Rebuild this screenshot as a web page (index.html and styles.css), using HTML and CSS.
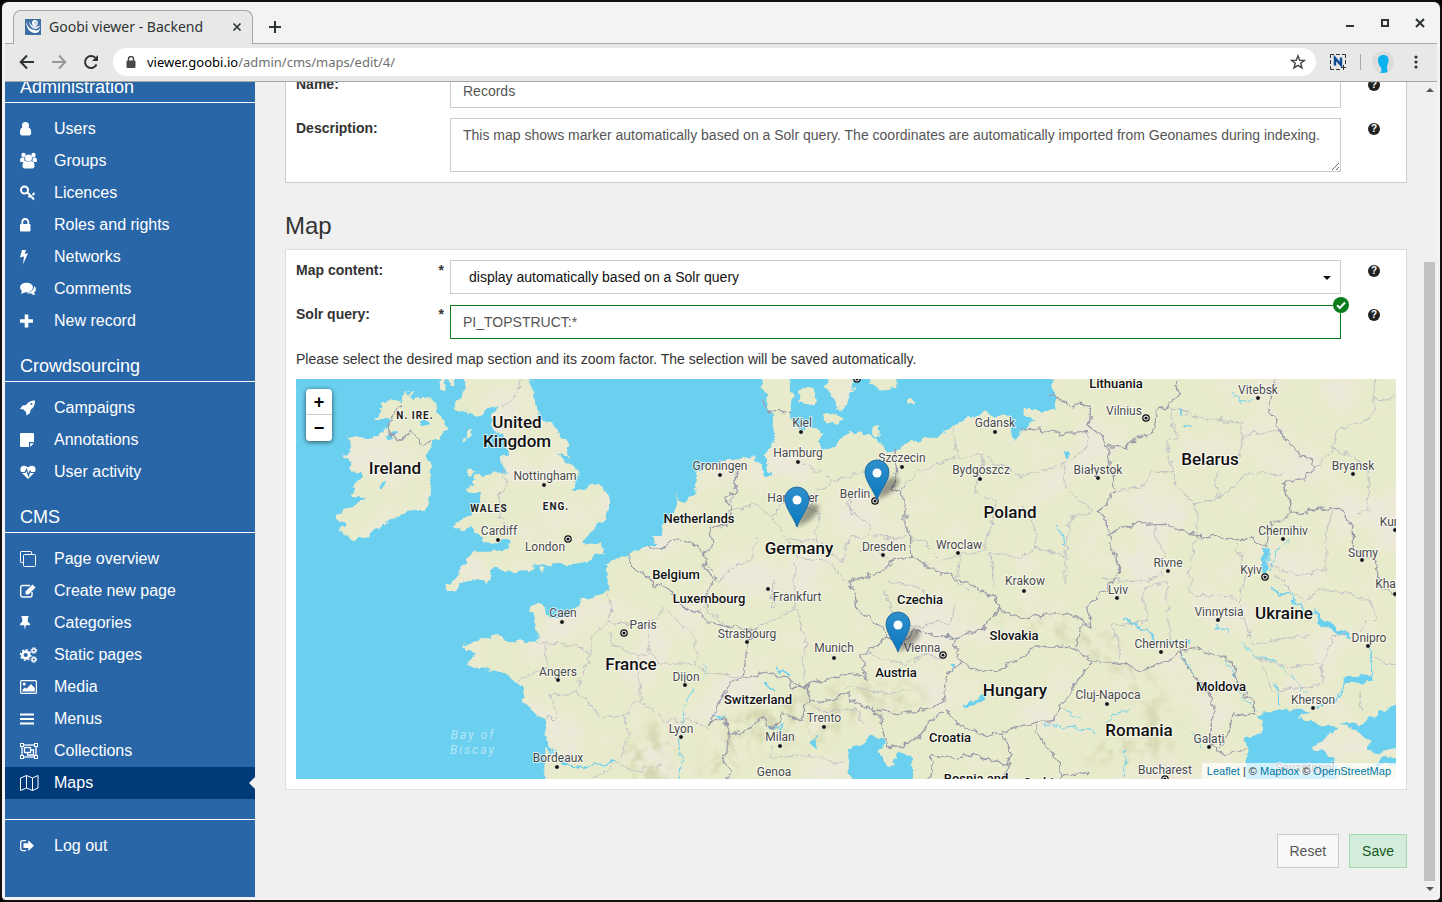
FILE: index.html
```html
<!DOCTYPE html>
<html lang="en">
<head>
<meta charset="utf-8">
<title>Goobi viewer - Backend</title>
<link rel="stylesheet" href="styles.css">
</head>
<body>
<div class="window">
  <header class="titlebar">
    <div class="tab">
      <svg class="favicon" viewBox="0 0 16 16"><rect width="16" height="16" fill="#3f6ea3"/><path d="M1 2c0 7 4 12 9 12 3 0 5-2 5-5-1 2-3 3-5 2C5 11 2 7 1 2z" fill="#fff"/><path d="M4 2c0 4 3 8 6 8 3 0 5-2 5-4-1 1-3 2-5 1C7 7 5 5 4 2z" fill="#dfe8f2"/><circle cx="10" cy="4" r="3" fill="#fff"/><circle cx="11" cy="4" r="2" fill="#c5d5e6"/></svg>
      <span class="tab-title">Goobi viewer - Backend</span>
      <button class="icon-btn" aria-label="Close tab"><svg width="10" height="10" viewBox="0 0 10 10"><path d="M1.500 1.500l7 7m0-7l-7 7" stroke="#2e3436" stroke-width="1.700"/></svg></button>
    </div>
    <button class="icon-btn new-tab" aria-label="New tab"><svg width="12" height="12" viewBox="0 0 12 12"><path d="M6 0v12M0 6h12" stroke="#2e3436" stroke-width="2"/></svg></button>
    <div class="window-controls">
      <button class="icon-btn" aria-label="Minimize"><svg width="10" height="10" viewBox="0 0 10 10"><path d="M1 8h8" stroke="#2e3436" stroke-width="2"/></svg></button>
      <button class="icon-btn" aria-label="Maximize"><svg width="10" height="10" viewBox="0 0 10 10"><path d="M2 2h6v6H2z" fill="none" stroke="#2e3436" stroke-width="2"/></svg></button>
      <button class="icon-btn" aria-label="Close"><svg width="10" height="10" viewBox="0 0 10 10"><path d="M1 1l8 8m0-8L1 9" stroke="#2e3436" stroke-width="2"/></svg></button>
    </div>
  </header>

  <nav class="toolbar" aria-label="Browser">
    <button class="icon-btn nav-btn" aria-label="Back"><svg width="16" height="16" viewBox="0 0 16 16"><path d="M15 8H2M8 1.500L1.700 8 8 14.500" fill="none" stroke="#2e3436" stroke-width="2"/></svg></button>
    <button class="icon-btn nav-btn" aria-label="Forward"><svg width="16" height="16" viewBox="0 0 16 16"><path d="M1 8h13M8 1.500L14.300 8 8 14.500" fill="none" stroke="#999" stroke-width="2"/></svg></button>
    <button class="icon-btn nav-btn" aria-label="Reload"><svg width="16" height="16" viewBox="0 0 16 16"><path d="M13.500 10.500A6 6 0 1 1 12.300 3.800" fill="none" stroke="#2e3436" stroke-width="2"/><path d="M15 1v6H9z" fill="#2e3436"/></svg></button>
    <div class="omnibox">
      <svg width="10" height="12" viewBox="0 0 10 12"><path d="M1 5h8v6.500H1z" fill="#4a4a4a" stroke="#4a4a4a" stroke-linejoin="round"/><path d="M2.500 5V3a2.500 2.500 0 0 1 5 0v2" fill="none" stroke="#4a4a4a" stroke-width="1.500"/></svg>
      <span class="url"><b>viewer.goobi.io</b>/admin/cms/maps/edit/4/</span>
      <button class="icon-btn" aria-label="Bookmark"><svg width="16" height="16" viewBox="0 0 16 16"><path d="M8 1.800l1.700 4.400 4.700.2-3.700 2.900 1.300 4.600L8 11.300l-4 2.600 1.300-4.600-3.700-2.900 4.700-.2z" fill="none" stroke="#444" stroke-width="1.400"/></svg></button>
    </div>
    <button class="icon-btn ext" aria-label="Extension"><svg width="16" height="16" viewBox="0 0 16 16"><path d="M.5 4V.5H4M6 .5h4M12 .5h3.500V4M15.500 6v4M.5 6v4M.5 12v3.500H4M6 15.500h4" fill="none" stroke="#333"/><path d="M5 11.500V4l6 7V3.500" fill="none" stroke="#0b4a94" stroke-width="2.400"/><path d="M13.500 11v5M11 13.500h5" stroke="#333"/></svg></button>
    <span class="divider"></span>
    <button class="icon-btn avatar" aria-label="Profile"><svg width="22" height="22" viewBox="0 0 22 22"><circle cx="11" cy="11" r="11" fill="#dcdcdc"/><path d="M6 9c0-3 2-5 5.500-5S17 6 16.500 10c-.3 3-1.500 4-1.500 6l.5 5c-3 1.500-6 1-8 .5l2-1-.5-4C7 15 6 12 6 9z" fill="#0db1f0"/></svg></button>
    <button class="icon-btn" aria-label="Menu"><svg width="4" height="14" viewBox="0 0 4 14"><g fill="#2e3436"><circle cx="2" cy="2" r="1.600"/><circle cx="2" cy="7" r="1.600"/><circle cx="2" cy="12" r="1.600"/></g></svg></button>
  </nav>

  <div class="viewport">
    <aside class="sidebar">
      <h3>Administration</h3>
      <ul>
        <li><a href="#"><svg viewBox="0 0 20 16"><circle cx="5.500" cy="4.500" r="3.500"/><path d="M0 11.500c0-4 1.500-5 3-5 1 1 4 1 5 0 1.500 0 3.200 1 3.200 5 0 2-.8 3-2.200 3H2C.7 14.500 0 13.500 0 11.500z"/></svg>Users</a></li>
        <li><a href="#"><svg viewBox="0 0 20 16"><circle cx="3.500" cy="2" r="2.200"/><circle cx="13.500" cy="2" r="2.200"/><circle cx="8.500" cy="5" r="3.500"/><path d="M0 8c0-3 1-3.500 2-3.500h2.500c-.5 2 0 3.500 1 4.500H1C.5 9 0 8.700 0 8zM17 8c0-3-1-3.500-2-3.500h-2.500c.5 2 0 3.500-1 4.500H16c.5 0 1-.3 1-1zM2.500 13c0-4 1.500-5 3-5 1.500 1 4.500 1 6 0 1.500 0 3 1 3 5 0 1.500-1 2.500-2.300 2.500H5c-1.500 0-2.500-1-2.500-2.500z"/></svg>Groups</a></li>
        <li><a href="#"><svg viewBox="0 0 20 16"><circle cx="4.500" cy="5" r="3.500" fill="none" stroke="#fff" stroke-width="2"/><path d="M7 7l7 7.500M10 10.500l-1.500 2M12.500 10l2-2" stroke="#fff" stroke-width="2" fill="none"/></svg>Licences</a></li>
        <li><a href="#"><svg viewBox="0 0 20 16"><rect y="7" width="10.500" height="7.500" rx="1"/><path d="M2.300 8V5a3 3 0 0 1 6 0v3" fill="none" stroke="#fff" stroke-width="1.800"/></svg>Roles and rights</a></li>
        <li><a href="#"><svg viewBox="0 0 20 16"><path d="M2 1h4L4.800 5l3.200-.8L3 15.500l1-8-4 1z"/></svg>Networks</a></li>
        <li><a href="#"><svg viewBox="0 0 20 16"><ellipse cx="6.500" cy="6.500" rx="6.500" ry="4.800"/><path d="M2 9.500L1 13l5-2zM14.300 5c2.200 2 2.200 5-.3 6.500L15 14c-1.500 0-2.500-.5-3.500-1.500-2 .3-4 0-5-.8 4 0 7.500-2.200 7.800-6.700z"/></svg>Comments</a></li>
        <li><a href="#"><svg viewBox="0 0 20 16"><path d="M6.500 1.500v13M0 8h13" stroke="#fff" stroke-width="3.600"/></svg>New record</a></li>
      </ul>
      <h3>Crowdsourcing</h3>
      <ul>
        <li><a href="#"><svg viewBox="0 0 20 16"><path d="M15 .5c0 5-1.500 7-4.500 9.500L10 13l-3.500 2.500-.5-3.500L3.500 9.500 0 9l2.500-3.500L6 5C8.500 2 10.500.5 15 .5z"/><circle cx="11.500" cy="4" r="1" fill="#2866a8"/></svg>Campaigns</a></li>
        <li><a href="#"><svg viewBox="0 0 20 16"><path d="M1 1h12a1 1 0 0 1 1 1v8H9v5H1a1 1 0 0 1-1-1V2a1 1 0 0 1 1-1zM10.200 11.200H14L10.200 15z"/></svg>Annotations</a></li>
        <li><a href="#"><svg viewBox="0 0 20 16"><path d="M8 15L1.500 8.500C-2 4 3-1 8 3.500 13-1 18 4 14.500 8.500z"/><path d="M1 8.500h4l1.500-3 2 6L10 7l1 1.500h4" fill="none" stroke="#2866a8" stroke-width="1.200"/></svg>User activity</a></li>
      </ul>
      <h3>CMS</h3>
      <ul>
        <li><a href="#"><svg class="line" viewBox="0 0 20 16"><path d="M3.500 11.500H1.200a.7.700 0 0 1-.7-.7V1.200c0-.4.300-.7.700-.7h9.600c.4 0 .7.300.7.700V3.500"/><rect x="3.500" y="3.500" width="12" height="12" rx="1"/></svg>Page overview</a></li>
        <li><a href="#"><svg class="line" viewBox="0 0 20 16"><path d="M12 9v3a2 2 0 0 1-2 2H2.700a2 2 0 0 1-2-2V4.500a2 2 0 0 1 2-2H10" stroke-width="1.400"/><path d="M5.500 11.500V8.500L12.500 1.500 15.500 4.500 8.500 11.500z" fill="#fff" stroke="none"/></svg>Create new page</a></li>
        <li><a href="#"><svg viewBox="0 0 20 16"><path d="M1.500 1h7v1.500L7.800 3v4c1.500.5 2.400 1.800 2.400 3.200H5.800L5 15l-.8-4.800H0C0 8.800.8 7.500 2.200 7V3l-.7-.5z"/></svg>Categories</a></li>
        <li><a href="#"><svg class="line" viewBox="0 0 20 16"><circle cx="5.700" cy="8" r="3.400" stroke-width="2.600"/><circle cx="5.700" cy="8" r="5.200" stroke-width="1.400" stroke-dasharray="2 2"/><circle cx="13.800" cy="3.500" r="1.800" stroke-width="1.400"/><circle cx="13.800" cy="3.500" r="2.900" stroke-dasharray="1.300 1"/><circle cx="13.800" cy="12.500" r="1.800" stroke-width="1.400"/><circle cx="13.800" cy="12.500" r="2.900" stroke-dasharray="1.300 1"/></svg>Static pages</a></li>
        <li><a href="#"><svg viewBox="0 0 20 16"><rect x=".6" y="1.600" width="15.800" height="12.800" rx="1" fill="none" stroke="#fff" stroke-width="1.200"/><circle cx="4.200" cy="5" r="1.600"/><path d="M2.500 12.500v-2l2.500-2 1.500 1.300L11 5l3.800 4v3.500z"/></svg>Media</a></li>
        <li><a href="#"><svg viewBox="0 0 20 16"><path d="M0 3.500h14M0 8h14M0 12.500h14" stroke="#fff" stroke-width="2"/></svg>Menus</a></li>
        <li><a href="#"><svg class="line" viewBox="0 0 20 16"><rect x="2" y="2" width="14" height="12" stroke-width="1.300"/><rect x="4.500" y="4.500" width="6" height="5" stroke-width="1.300"/><path d="M10.500 7H13.500v5H7.500V9.500" stroke-width="1.300"/><g fill="#2866a8"><rect x=".5" y=".5" width="3" height="3"/><rect x="14.500" y=".5" width="3" height="3"/><rect x=".5" y="12.500" width="3" height="3"/><rect x="14.500" y="12.500" width="3" height="3"/></g></svg>Collections</a></li>
        <li class="active"><a href="#"><svg class="line" viewBox="0 0 20 16"><path d="M.5 3L6.500.5l6 2.500 5.500-2.500v12.500l-5.500 2.500-6-2.500-6 2.500zM6.500.5V13M12.500 3v12.500"/></svg>Maps</a></li>
      </ul>
      <ul class="logout">
        <li><a href="#"><svg viewBox="0 0 20 16"><path d="M6 2.600H2.500A1.800 1.800 0 0 0 .7 4.400v6.400a1.800 1.800 0 0 0 1.800 1.800H6" fill="none" stroke="#fff" stroke-width="1.300"/><path d="M3.500 5.200h4.800V2.300L14 7.700 8.300 13v-2.900H3.500z"/></svg>Log out</a></li>
      </ul>
    </aside>

    <main class="content">
      <section class="card card-first">
        <div class="row">
          <label for="name">Name:</label>
          <input id="name" type="text" value="Records">
          <button class="help" aria-label="Help">?</button>
        </div>
        <div class="row">
          <label for="description">Description:</label>
          <textarea id="description">This map shows marker automatically based on a Solr query. The coordinates are automatically imported from Geonames during indexing.</textarea>
          <button class="help" aria-label="Help">?</button>
        </div>
      </section>

      <h2>Map</h2>
      <section class="card">
        <div class="row">
          <label for="content">Map content:<span>*</span></label>
          <div class="field">
            <select id="content"><option>display automatically based on a Solr query</option></select>
            <span class="caret"></span>
          </div>
          <button class="help" aria-label="Help">?</button>
        </div>
        <div class="row">
          <label for="solr">Solr query:<span>*</span></label>
          <div class="field checked">
            <input id="solr" class="valid" type="text" value="PI_TOPSTRUCT:*">
            <svg class="check" viewBox="0 0 16 16"><circle cx="8" cy="8" r="8" fill="#0a7c1c"/><path d="M4 8.200l2.800 2.800L12 5.500" fill="none" stroke="#fff" stroke-width="2"/></svg>
          </div>
          <button class="help" aria-label="Help">?</button>
        </div>
        <p>Please select the desired map section and its zoom factor. The selection will be saved automatically.</p>
        <div class="map">
          <svg class="map-canvas" viewBox="0 0 1100 400" preserveAspectRatio="xMidYMid slice" role="img" aria-label="Map of Europe">
            <defs>
              <filter id="coast" filterUnits="userSpaceOnUse" x="-40" y="-40" width="3400" height="1320" color-interpolation-filters="sRGB">
                <feTurbulence type="fractalNoise" baseFrequency=".035" numOctaves="3" seed="4" result="n"/>
                <feDisplacementMap in="SourceGraphic" in2="n" scale="30" xChannelSelector="R" yChannelSelector="G" result="land"/>
                <feTurbulence type="fractalNoise" baseFrequency=".006" numOctaves="4" seed="11" result="t"/>
                <feColorMatrix in="t" values="0 0 0 0 .925  0 0 0 0 .914  0 0 0 0 .847  4 0 0 0 -1.900" result="patch"/>
                <feComposite in="patch" in2="land" operator="in" result="p"/>
                <feMerge><feMergeNode in="land"/><feMergeNode in="p"/></feMerge>
              </filter>
              <filter id="jag" filterUnits="userSpaceOnUse" x="-40" y="-40" width="3400" height="1320" color-interpolation-filters="sRGB">
                <feTurbulence type="fractalNoise" baseFrequency=".035" numOctaves="3" seed="4" result="n"/>
                <feDisplacementMap in="SourceGraphic" in2="n" scale="30" xChannelSelector="R" yChannelSelector="G"/>
              </filter>
              <filter id="relief" filterUnits="userSpaceOnUse" x="-40" y="-40" width="3400" height="1320" color-interpolation-filters="sRGB">
                <feGaussianBlur in="SourceGraphic" stdDeviation="24" result="b"/>
                <feTurbulence type="fractalNoise" baseFrequency=".022" numOctaves="3" seed="8" result="t"/>
                <feColorMatrix in="t" values="0 0 0 0 .8  0 0 0 0 .81  0 0 0 0 .65  0 4 0 0 -1.800" result="c"/>
                <feComposite in="c" in2="b" operator="in"/>
              </filter>
              <linearGradient id="pinfill" x2="0" y2="1"><stop offset="0" stop-color="#2e8fcb"/><stop offset="1" stop-color="#0a78c0"/></linearGradient>
              <filter id="soft" x="-50%" y="-50%" width="200%" height="200%"><feGaussianBlur stdDeviation="2"/></filter>
              <g id="pin"><path d="M0 0L4-12C9-22 16-25 21-22 24-19 20-12 12-6z" fill="#000" opacity=".35" filter="url(#soft)"/><path d="M0 0C-3-9-12-19-12-28a12 12 0 0 1 24 0C12-19 3-9 0 0z" fill="url(#pinfill)" stroke="#2a6f9e"/><circle cy="-27" r="4.500" fill="#fff"/></g>
              <circle id="dot" r="2.300" fill="#111" stroke="#fff" stroke-opacity=".6"/>
              <g id="cap"><circle r="3.200" fill="#fff" stroke="#111" stroke-width="1.200"/><circle r="1.600" fill="#111"/></g>
            </defs>
            <g transform="translate(0 -4) scale(.33333)">
              <g filter="url(#coast)" fill="#e8ebcb">
                <path d="M250 85 285 75 318 85 325 55 345 58 350 75 405 70 415 85 418 110 445 140 450 165 435 190 405 205 395 240 405 290 410 330 385 410 330 410 255 455 210 488 165 490 130 465 150 450 115 418 160 400 210 370 165 365 185 320 205 300 150 285 165 260 145 240 170 235 155 185 190 180 215 190 250 180 270 160 285 135 235 130 260 105z"/>
                <path d="M500-10 510 40 480 80 475 100 520 115 545 125 575 105 610 95 590 120 585 165 620 175 640 230 618 255 620 280 640 290 600 290 560 300 545 300 535 330 505 345 555 350 550 380 520 415 490 440 470 448 490 465 520 460 555 490 580 500 620 505 645 485 635 520 615 530 530 530 510 570 480 610 440 640 470 652 500 620 540 610 570 628 585 600 590 580 650 588 700 585 720 565 750 570 800 565 840 570 880 550 920 530 915 508 865 505 885 465 930 430 942 380 930 345 890 330 855 345 828 345 848 310 840 280 785 240 825 248 810 200 770 150 735 130 720 80 705 20 700-10z"/>
                <path d="M503 195 515 168 528 165 520 192zM512 285 525 280 542 290 530 305 515 302zM725 578 738 572 748 580 738 590zM430 52 440 15 455-10 470-10 475 35 465 30 455 12 445 50z"/>
                <path d="M1382-10 1400 30 1420 60 1415 100 1435 120 1430 150 1440 180 1425 210 1410 235 1415 280 1435 300 1410 310 1400 280 1385 255 1340 245 1300 255 1240 270 1205 290 1198 350 1165 385 1145 380 1150 340 1135 400 1110 440 1095 480 1065 490 1092 505 1055 512 1000 540 940 560 935 600 935 640 925 655 860 675 835 700 835 715 800 722 750 720 735 690 700 690 715 720 720 760 725 800 690 800 640 805 610 780 560 790 505 810 510 825 540 835 515 860 535 875 600 890 640 905 660 925 685 945 680 980 705 1010 745 1032 755 1065 745 1090 775 1140 748 1115 748 1250 3340 1250 3340-10 2272-10 2275 105 2185 105 2190 125 2225 128 2175 165 2154 205 2142 185 2152 155 2140 125 2060 115 2010 128 1960 165 1900 190 1830 205 1810 225 1770 230 1755 210 1740 190 1700 180 1670 165 1640 190 1607 212 1575 222 1565 200 1580 175 1540 155 1500 160 1480 110 1490 60 1470-10z"/>
                <path d="M1507 45 1530 35 1558 50 1555 85 1530 95 1512 75zM1592-10 1595 40 1615 70 1630 102 1650 90 1655 60 1680 50 1665 20 1680-10zM1580 125 1610 115 1645 135 1620 150 1590 140zM1710-10 1720 30 1740 45 1800 40 1805-10zM1832 68 1845 65 1858 80 1852 92 1835 84zM1725 155 1745 150 1755 172 1735 185 1722 172z"/>
              </g>
              <g filter="url(#relief)" fill="#000" opacity=".65"><path d="M1260 1080 1340 990 1500 960 1640 930 1800 920 1920 960 1840 1000 1700 1010 1600 1090 1480 1110 1340 1140 1300 1260 1200 1240zM2080 740 2300 720 2420 780 2560 900 2640 1080 2600 1160 2380 1160 2360 1120 2560 1080 2500 920 2330 800zM980 1100 1120 1020 1130 1240 1000 1240z"/></g>
              <g filter="url(#jag)" fill="#6bd0ef">
                <path d="M1657 1250 1660 1180 1655 1120 1690 1110 1720 1085 1760 1090 1762 1120 1750 1125 1770 1170 1790 1175 1805 1130 1840 1140 1845 1180 1860 1250zM2847 1250 2852 1165 2850 1090 2890 1070 2900 1040 2880 1020 2920 1010 2980 1000 3050 1010 3010 1030 3080 1050 3125 1055 3110 1080 3065 1100 3048 1120 3075 1128 3115 1150 3118 1180 3130 1250zM3320 990 3265 1000 3230 1025 3190 1050 3130 1045 3190 1070 3215 1100 3220 1125 3265 1130 3320 1115zM3320 1145 3250 1150 3230 1165 3320 1175z"/>
                <path d="M370 140 385 130 400 145 385 155zM245 345 265 315 270 322 252 345zM270 182 298 168 300 180 285 190zM2000 990 2040 975 2065 960 2068 968 2040 988 2005 996zM3050 700 3075 730 3160 775 3170 788 3070 755zM2900 522 2915 522 2915 595 2902 595zM3140 905 3225 895 3235 920 3150 925zM2300 235 2320 232 2315 248 2302 245zM2645 105 2660 105 2655 120zM2665 150 2690 152 2675 160zM1540 1105 1565 1080 1555 1115zM1960 870 1975 868 1970 892z"/>
                <g fill="none" stroke="#6bd0ef" stroke-width="5"><path d="M2920 635 2955 660 2980 650 3000 690 3050 720M3225 810 3225 900M3150 920 3125 975 3060 1000M2940 920 2955 990M1252 1020 1290 1025M1438 880 1490 905M1405 930 1435 945M790 1165 850 1178 905 1170 960 1160M775 1125 790 1165M2485 730 2550 765 2580 800 2680 800M1460 1050 1450 1075M1465 1045 1415 1065" /><path d="M1150 1090 1155 1140 1145 1240M1190 940 1160 1000 1150 1060M2300 1010 2360 1030M2245 1050 2350 1060 2400 1075M2430 1050 2450 1020 2500 1010M2485 1130 2485 1210M2275 450 2305 490 2315 530M2810 50 2835 85 2880 70M2760 750 2800 775M2830 800 2880 845 2940 860 3000 920 3030 960M2655 830 2690 890M2780 850 2810 880 2830 950 2880 1010M2980 490 2940 530 2920 590M2690 1070 2715 1120M1220 870 1235 890 1225 910" stroke-width="3"/></g>
              </g>
              <g filter="url(#jag)" fill="none" stroke="#c0c0c6" stroke-width="3">
                <path d="M675 12 660 60 620 95M620 285 635 330 610 360 610 430 630 455M725 800 850 815 885 840 860 900 835 950M750 805 752 885 690 900 660 920M765 965 835 950 870 970 910 1025 980 1020M765 965 785 1030 745 1032M925 655 945 690 940 740 885 790 885 840M940 740 1060 750 1092 720 1105 690M940 770 950 810 1020 845 1060 825 1060 750M1020 845 1035 980 980 1020 1000 1080 970 1160 890 1210M1035 980 1080 1010 1110 1040 1180 1030 1240 1060M970 1160 1020 1190 1092 1170M1060 825 1092 870 1200 865 1220 890 1340 905M1110 700 1200 790 1200 870M1300 755 1220 700 1240 650"/>
                <path d="M1318 275 1315 350 1300 410 1380 390 1430 430 1450 380 1540 400 1560 350 1610 320 1580 290 1520 270M1610 320 1700 290 1795 300M1540 400 1575 420 1550 470 1560 500M1430 430 1470 490 1520 500 1560 500 1640 560 1660 490 1720 480 1730 450 1660 410 1665 360M1380 490 1370 550 1310 580 1260 620M1470 490 1500 550 1600 560 1650 620M1500 560 1500 700 1420 740 1385 762M1430 620 1430 700M1500 700 1530 800 1520 910M1720 480 1790 490 1835 480M1690 520 1740 525 1780 560M1765 650 1790 720 1850 760 1920 740 1960 750 1980 690M1780 620 1870 640 1930 700M1700 830 1830 870 1880 840 1950 850M1650 930 1750 950 1800 960 1850 940M1550 1000 1600 1010 1680 1000 1700 1050M1430 1110 1420 1150 1530 1140 1640 1165"/>
                <path d="M1970 150 1980 250 1920 260 1830 320 1810 360M1980 250 2060 240 2150 290 2172 310 2300 270 2380 210 2370 170M2060 240 2040 350 2100 380 2080 480 2060 530 2000 535 1940 560 1870 490 1850 490M2080 530 2172 550 2220 520 2310 540 2310 630M2172 390 2220 450 2220 520M2300 270 2310 340 2390 410 2320 430 2310 540M2080 530 2100 640M1990 540 1980 600 2010 650"/>
                <path d="M2620 95 2640 190 2610 200 2635 290 2570 290 2550 330 2460 350M2620 95 2720 130 2840 145 2830 250 2765 260 2760 300 2770 370 2700 390 2700 490M2635 290 2640 340 2700 390M2770 370 2860 295 2960 300M2840 180 2930 170 2960 165M3240 12 3230 130 3130 160 3110 220 3070 270M3110 220 3180 250 3220 300 3220 400 3180 420M3230 70 3300 72M2580 450 2580 500 2610 540 2600 600 2510 620 2420 610M2700 490 2680 600 2690 660 2820 670M2820 510 2850 600 2830 680 2850 750 2870 810 3040 780M2920 570 3000 600 3090 590 3090 500 3110 400M2940 600 3020 680 3080 640 3220 670 3240 720 3190 770M2480 850 2450 750 2550 740 2540 640 2610 620 2620 800M2880 850 3000 880 3080 860 3110 790 3150 770M3080 870 3080 930 2930 950 2890 850M3190 940 3200 1010M3240 850 3300 870"/>
              </g>
              <g filter="url(#jag)" fill="none" stroke="#9a9ba9" stroke-width="4">
                <path d="M320 90 290 130 270 155 300 195 325 195 345 165 375 205 405 200M1400 80 1420 110 1490 110M1000 540 1010 575 1050 600 1092 635 1132 655 1157 695 1212 715 1232 740 1300 755 1385 762 1357 805 1350 860 1340 905M1055 515 1092 522 1132 497 1192 502 1222 535 1225 570 1260 610 1232 650 1232 700M1320 275 1317 350 1287 370 1307 410 1297 450 1242 455 1247 510 1222 540"/>
                <path d="M1340 910 1302 920 1282 970 1237 1045 1282 1025 1302 1075 1342 1070 1402 1025 1422 1065 1462 1015 1517 1035 1522 1000 1542 975 1532 930 1482 940 1482 910 1412 890 1342 908M1282 1040 1307 1080 1282 1145 1302 1185 1292 1220M1482 915 1522 935 1562 920 1622 905 1682 900 1712 915 1697 840 1757 805 1777 785 1812 810 1852 765 1922 780 1982 790 1977 820 1997 860 1952 900 1947 970 1912 995 1832 1015 1732 1005 1662 975 1657 955 1572 985 1537 975M1777 785 1742 750 1682 700 1672 650 1657 620 1752 590 1807 550 1852 555 1942 595 1992 610 2042 640 2102 670 2112 705 2172 730 2240 718 2320 715 2382 755M1797 220 1802 290 1792 340 1827 380 1827 450 1847 490 1847 555M2112 705 2082 730 2052 765 1982 790"/>
                <path d="M1997 860 2042 890 2112 885 2172 845 2232 810 2337 820 2362 750M2337 820 2387 860 2342 920 2292 1000 2267 1040 2180 1048 2122 1070 2072 1085 1982 1045 1947 1000M1732 1005 1752 1030 1772 1115 1842 1110 1872 1080 1902 1040 1942 1010M1902 1215 1907 1140 1962 1150 2022 1140 2142 1170 2122 1215M2117 1070 2147 1140 2122 1170M2212 1050 2247 1115 2292 1160 2302 1200 2380 1195M2387 860 2502 870 2532 890 2612 860 2652 830 2692 900 2752 970 2747 1110 2782 1135 2852 1120M2652 825 2712 820 2792 855 2822 870 2817 910 2842 950 2872 980 2872 1020 2812 1015 2802 1060 2772 1120"/>
                <path d="M2257 60 2312 85 2382 90 2377 150 2412 180 2432 215 2457 350 2407 410 2437 440 2437 485 2467 560 2467 600 2372 700 2382 755M2172 160 2292 172 2382 170M2432 215 2492 220 2522 190 2572 170 2587 110 2652 60 2642 12M2437 485 2492 450 2602 445 2702 485 2772 485 2812 495 2872 490 2912 515M2937 12 2922 110 2962 180 3012 240 3062 270 3032 310 2962 320 2987 420 2922 450 2912 515M2987 420 3042 405 3132 400 3172 460 3172 520 3242 560 3242 630 3300 660"/>
              </g>
            </g>
            <g class="cities">
              <text x="249" y="101">Nottingham</text><use href="#dot" x="248" y="106"/>
              <text x="203" y="156">Cardiff</text><use href="#dot" x="202" y="161"/>
              <text x="249" y="172">London</text><use href="#cap" x="272" y="160"/>
              <text x="267" y="238">Caen</text><use href="#dot" x="266" y="243"/>
              <text x="347" y="250">Paris</text><use href="#cap" x="328" y="254"/>
              <text x="262" y="297">Angers</text><use href="#dot" x="262" y="301"/>
              <text x="262" y="383">Bordeaux</text><use href="#dot" x="261" y="388"/>
              <text x="424" y="91">Groningen</text><use href="#dot" x="424" y="96"/>
              <text x="506" y="48">Kiel</text><use href="#dot" x="505" y="53"/>
              <text x="502" y="78">Hamburg</text><use href="#dot" x="502" y="83"/>
              <text x="497" y="123">Hannover</text>
              <text x="559" y="119">Berlin</text><use href="#cap" x="579" y="122"/>
              <text x="606" y="83">Szczecin</text><use href="#dot" x="606" y="88"/>
              <text x="685" y="95">Bydgoszcz</text><use href="#dot" x="684" y="100"/>
              <text x="699" y="48">Gdansk</text><use href="#dot" x="699" y="53"/>
              <text x="588" y="172">Dresden</text><use href="#dot" x="587" y="176"/>
              <text x="663" y="170">Wroclaw</text><use href="#dot" x="662" y="174"/>
              <text x="729" y="206">Krakow</text><use href="#dot" x="728" y="212"/>
              <text x="501" y="222">Frankfurt</text><use href="#dot" x="472" y="210"/>
              <text x="451" y="259">Strasbourg</text><use href="#dot" x="451" y="263"/>
              <text x="538" y="273">Munich</text><use href="#dot" x="538" y="279"/>
              <text x="626" y="273">Vienna</text><use href="#cap" x="647" y="276"/>
              <text x="390" y="302">Dijon</text><use href="#dot" x="389" y="306"/>
              <text x="385" y="354">Lyon</text><use href="#dot" x="385" y="358"/>
              <text x="528" y="343">Trento</text><use href="#dot" x="528" y="348"/>
              <text x="484" y="362">Milan</text><use href="#dot" x="484" y="367"/>
              <text x="478" y="397">Genoa</text>
              <text x="828" y="36">Vilnius</text><use href="#cap" x="850" y="39"/>
              <text x="962" y="15">Vitebsk</text><use href="#dot" x="962" y="19"/>
              <text x="802" y="95">Białystok</text><use href="#dot" x="802" y="99"/>
              <text x="1057" y="91">Bryansk</text><use href="#dot" x="1057" y="95"/>
              <text x="987" y="156">Chernihiv</text><use href="#dot" x="987" y="160"/>
              <text x="1099" y="147">Kursk</text><use href="#dot" x="1099" y="151"/>
              <text x="1067" y="178">Sumy</text><use href="#dot" x="1066" y="181"/>
              <text x="872" y="188">Rivne</text><use href="#dot" x="872" y="192"/>
              <text x="955" y="195">Kyiv</text><use href="#cap" x="969" y="198"/>
              <text x="1099" y="209">Kharkiv</text><use href="#dot" x="1099" y="215"/>
              <text x="822" y="215">Lviv</text><use href="#dot" x="821" y="219"/>
              <text x="923" y="237">Vinnytsia</text><use href="#dot" x="922" y="241"/>
              <text x="865" y="269">Chernivtsi</text><use href="#dot" x="865" y="273"/>
              <text x="1073" y="263">Dnipro</text><use href="#dot" x="1072" y="267"/>
              <text x="812" y="320">Cluj-Napoca</text><use href="#dot" x="811" y="325"/>
              <text x="1017" y="325">Kherson</text><use href="#dot" x="1017" y="329"/>
              <text x="913" y="364">Galați</text><use href="#dot" x="913" y="368"/>
              <text x="869" y="395">Bucharest</text><use href="#cap" x="869" y="400"/>
              <text x="1009" y="393">Sevastopol</text>
              <use href="#cap" x="561" y="0"/>
            </g>
            <g class="countries big">
              <text x="99" y="95">Ireland</text><text x="221" y="49">United</text><text x="221" y="68">Kingdom</text>
              <text x="335" y="291">France</text><text x="503" y="175">Germany</text><text x="714" y="139">Poland</text>
              <text x="914" y="86">Belarus</text><text x="988" y="240">Ukraine</text><text x="719" y="317">Hungary</text><text x="843" y="357">Romania</text>
            </g>
            <g class="countries">
              <text x="403" y="144">Netherlands</text><text x="380" y="200">Belgium</text><text x="413" y="224">Luxembourg</text>
              <text x="462" y="325">Switzerland</text><text x="624" y="225">Czechia</text><text x="600" y="298">Austria</text>
              <text x="718" y="261">Slovakia</text><text x="654" y="363">Croatia</text><text x="680" y="404">Bosnia and</text>
              <text x="820" y="9">Lithuania</text><text x="925" y="312">Moldova</text><text x="746" y="408">Serbia</text>
            </g>
            <g class="regions"><text x="119" y="40">N. IRE.</text><text x="193" y="133">WALES</text><text x="260" y="131">ENG.</text></g>
            <g class="water"><text x="177" y="360">Bay of</text><text x="177" y="375">Biscay</text></g>
            <use href="#pin" x="501" y="148"/><use href="#pin" x="581" y="121"/><use href="#pin" x="602" y="273"/>
          </svg>
          <div class="zoom"><button aria-label="Zoom in">+</button><button aria-label="Zoom out">−</button></div>
          <div class="attribution"><a href="#">Leaflet</a> | © <a href="#">Mapbox</a> © <a href="#">OpenStreetMap</a></div>
        </div>
      </section>
      <div class="actions"><button class="btn">Reset</button><button class="btn save">Save</button></div>
    </main>
    <div class="scrollbar"><span class="arrow up"></span><span class="thumb"></span><span class="arrow down"></span></div>
  </div>
</div>
</body>
</html>
```

FILE: styles.css
```css
* { box-sizing: border-box; }
body { margin: 0; background: #000; font: 14px/20px "Liberation Sans", Arial, sans-serif; color: #333; }
button { font: inherit; margin: 0; cursor: pointer; }
.window { display: flex; flex-direction: column; height: 100vh; border: 2px solid #111; border-radius: 8px 8px 6px 6px; background: #f3f3f3; padding: 0 3px 3px; overflow: hidden; }
.icon-btn { display: flex; align-items: center; justify-content: center; border: 0; padding: 0; background: none; flex: none; }

.titlebar { flex: none; display: flex; height: 42px; border-bottom: 1px solid #a5a7a4; padding: 8px 12px 0 8px; }
.tab { display: flex; align-items: center; width: 240px; height: 34px; padding: 0 10px 2px 11px; background: #e8e8e6; border: 1px solid #a5a7a4; border-bottom: 0; border-radius: 8px 8px 0 0; font: 14px/20px "Noto Sans", sans-serif; color: #2e3436; }
.favicon { width: 16px; height: 16px; margin-right: 8px; flex: none; }
.tab-title { flex: 1; white-space: nowrap; }
.new-tab { width: 44px; height: 34px; }
.window-controls { display: flex; gap: 25px; margin-left: auto; height: 26px; }

.toolbar { flex: none; display: flex; align-items: center; height: 38px; background: #e8e8e6; border-bottom: 1px solid #a5a7a4; padding: 0 19px 1px 14px; }
.nav-btn { width: 16px; margin-right: 16px; }
.nav-btn:nth-child(3) { margin-right: 14px; }
.omnibox { flex: 1; display: flex; align-items: center; height: 28px; padding: 0 10px 0 13px; border-radius: 14px; background: #fff; }
.url { flex: 1; margin-left: 11px; font: 13px/20px "Noto Sans", sans-serif; color: #707070; }
.url b { font-weight: 400; color: #000; }
.ext { margin-left: 14px; }
.divider { width: 1px; height: 16px; margin: 0 11px 0 14px; background: #aaa; }
.avatar { margin-right: 20px; }

.viewport { flex: 1; min-height: 0; display: flex; background: #f0f0f0; }
.sidebar { width: 250px; flex: none; display: flex; flex-direction: column; justify-content: flex-end; overflow: hidden; background: #2866a8; color: #fff; padding-bottom: 35px; }
.sidebar > * { flex: none; }
.sidebar h3 { margin: 0; padding: 18px 15px 4px; border-bottom: 1px solid #fff; font: 18px/22px "Liberation Sans", Arial, sans-serif; }
.sidebar ul { margin: 0; padding: 10px 0 0; list-style: none; }
.sidebar li { position: relative; }
.sidebar a { display: flex; align-items: center; height: 32px; padding: 0 15px 1px; color: #fff; font-size: 16px; text-decoration: none; }
.sidebar svg { width: 20px; height: 16px; margin-right: 14px; fill: #fff; overflow: visible; }
.sidebar svg.line { fill: none; stroke: #fff; }
.sidebar .active { background: #003a78; }
.active::after { content: ""; position: absolute; right: 0; top: 10px; border: 6px solid transparent; border-right-color: #f0f0f0; border-left: 0; }
.sidebar .logout { margin-top: 20px; border-top: 1px solid #fff; }

.content { flex: 1; min-width: 0; display: flex; flex-direction: column; justify-content: flex-end; overflow: hidden; padding: 0 15px 29px 30px; }
.content > * { flex: none; }
.card { background: #fff; border: 1px solid #ddd; padding: 10px; }
.card-first { border-color: #ccc; }
.row { display: grid; grid-template-columns: 154px 1fr 55px; margin-bottom: 10px; align-items: start; }
.card-first .row:last-child { margin-bottom: 0; }
label { display: flex; justify-content: space-between; padding-right: 6px; font-weight: 700; }
input, textarea, select { display: block; width: 100%; height: 34px; margin: 0; padding: 6px 12px; border: 1px solid #ccc; border-radius: 0; background: #fff; font: inherit; color: #555; outline: 0; }
textarea { height: 54px; resize: vertical; overflow: hidden; }
select { appearance: none; padding-left: 18px; color: #111; }
.field { position: relative; }
.checked { margin-top: 1px; }
.caret { position: absolute; right: 10px; top: 16px; border: 4px solid transparent; border-top-color: #111; border-bottom: 0; pointer-events: none; }
.valid { border-color: #0a7c1c; }
.check { position: absolute; right: -8px; top: -8px; width: 16px; height: 16px; }
.help { justify-self: end; width: 12px; height: 12px; margin: 5px 16px 0 0; padding: 0; border: 0; border-radius: 50%; background: #222; color: #fff; font: 700 10px/12px "Liberation Sans", Arial, sans-serif; }
h2 { margin: 29px 0 9px; font: 24px/28px "Liberation Sans", Arial, sans-serif; }
.card p { margin: 0 0 10px; }

.map { position: relative; height: 400px; overflow: hidden; background: #6bd0ef; }
.map-canvas { display: block; width: 100%; height: 100%; }
.map-canvas text { text-anchor: middle; paint-order: stroke; stroke: #fff; stroke-opacity: .7; stroke-width: 2px; stroke-linejoin: round; font-family: Roboto, sans-serif; }
.cities text { font-size: 12px; fill: #4a4a4a; }
.countries text { font-size: 13px; font-weight: 500; fill: #111; }
.countries.big text { font-size: 17px; }
.regions text { font-size: 10px; font-weight: 700; letter-spacing: 1px; fill: #222; }
.map-canvas .water text { font-size: 12px; font-style: italic; letter-spacing: 2px; fill: #b5e6f6; stroke: none; }
.zoom { position: absolute; left: 10px; top: 10px; width: 26px; border-radius: 4px; overflow: hidden; box-shadow: 0 1px 5px rgba(0, 0, 0, .65); }
.zoom button { display: block; width: 26px; height: 26px; padding: 0; border: 0; background: #fff; font: 700 18px/26px "Liberation Sans", Arial, sans-serif; color: #000; }
.zoom button:first-child { border-bottom: 1px solid #ccc; }
.attribution { position: absolute; right: 0; bottom: 0; padding: 0 5px; background: rgba(255, 255, 255, .7); font-size: 11px; line-height: 16px; }
.attribution a { color: #0078a8; text-decoration: none; }

.actions { display: flex; justify-content: flex-end; gap: 10px; margin-top: 44px; }
.btn { height: 34px; padding: 0 12px; border: 1px solid #ccc; background: #f8f8f8; color: #555; }
.save { border-color: #a3d7ae; background: #d4edda; color: #155724; }

.scrollbar { width: 15px; flex: none; display: flex; flex-direction: column; align-items: center; padding: 6px 0 6px; }
.arrow { border: 4px solid transparent; }
.up { border-bottom-color: #555; border-top: 0; }
.down { border-top-color: #555; border-bottom: 0; margin-top: 6px; }
.thumb { flex: 1; width: 11px; margin-top: 170px; background: #c1c1c1; }
```
